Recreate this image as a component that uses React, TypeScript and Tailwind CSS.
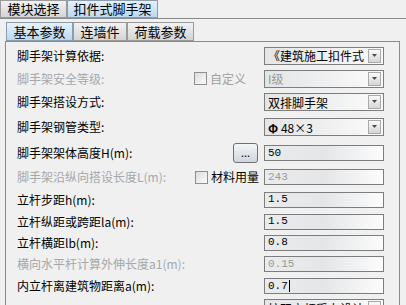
import React from 'react';

const font = "font-['SimSun','Noto_Sans_CJK_SC',sans-serif]";

function Arrow() {
  return (
    <div className="shrink-0 w-[13px] h-[14px] border border-[#a9a9a9] bg-gradient-to-b from-[#fafafa] to-[#d6d6d6] flex items-center justify-center">
      <svg width="7" height="6" viewBox="0 0 7 6">
        <path d="M1 1h5L3.5 4z" fill="#4a4a4a" />
      </svg>
    </div>
  );
}

function Combo({ text, disabled }: { text: React.ReactNode; disabled?: boolean }) {
  return (
    <div className="w-[120px] h-[18px] border border-[#7d7d7d] bg-gradient-to-r from-[#e4e5e6] via-[#eeeff0] to-[#fbfbfb] flex items-center pl-[3px] pr-[2px]">
      <span className={`flex-1 min-w-0 whitespace-nowrap overflow-hidden leading-[15px] ${disabled ? 'text-[#9a9a9a]' : 'text-black'}`}>{text}</span>
      <Arrow />
    </div>
  );
}

function Field({ value, disabled, cursor }: { value: string; disabled?: boolean; cursor?: boolean }) {
  return (
    <div className="w-[120px] h-[16px] border border-[#7d7d7d] bg-gradient-to-r from-[#eaebec] via-[#e4e6e8] to-[#fcfcfc] flex items-center pl-[3px]">
      <span className={`leading-[13px] font-['Liberation_Mono',monospace] text-[11px] ${disabled ? 'text-[#9a9a9a]' : 'text-black'}`}>{value}</span>
      {cursor && <span className="w-px h-[12px] bg-black ml-px" />}
    </div>
  );
}

function Check({ label, disabled }: { label: string; disabled?: boolean }) {
  return (
    <div className="flex items-center gap-[3px]">
      <div className="w-[13px] h-[13px] border border-[#8f8f8f] bg-gradient-to-br from-[#dcdcdc] to-[#fbfbfb]" />
      <span className={disabled ? 'text-[#a0a0a0]' : 'text-black'}>{label}</span>
    </div>
  );
}

function Row({ h, label, disabled, mid, control }: { h: string; label: string; disabled?: boolean; mid?: React.ReactNode; control: React.ReactNode }) {
  return (
    <div className={`flex items-center ${h} pl-[11px] pr-[15px]`}>
      <span className={`flex-1 whitespace-nowrap ${disabled ? 'text-[#a4a8ac]' : 'text-black'}`}>{label}</span>
      {mid}
      {control}
    </div>
  );
}

export default function App() {
  return (
    <div className={`w-[406px] h-[305px] overflow-hidden bg-[#f0f0f0] text-[12px] ${font}`}>
      <div className="flex h-[19px] border-b border-[#8a8a8a]">
        <div className="w-[67px] h-[18px] border border-[#9a9a9a] bg-gradient-to-b from-[#f2f2f2] to-[#d4d4d4] flex items-center justify-center text-[13px]">模块选择</div>
        <div className="w-[91px] h-[18px] border border-[#8a9cad] bg-gradient-to-b from-[#e6f2fc] to-[#b9d9f2] flex items-center justify-center text-[13px]">扣件式脚手架</div>
      </div>
      <div className="pl-[5px] pr-[6px] pt-[3px]">
        <div className="flex h-[19px] pl-px">
          <div className="w-[67px] border border-[#8a9cad] bg-gradient-to-b from-[#e6f2fc] to-[#b9d9f2] flex items-center justify-center text-[13px]">基本参数</div>
          <div className="w-[54px] border border-[#9a9a9a] bg-gradient-to-b from-[#f2f2f2] to-[#d4d4d4] flex items-center justify-center text-[13px]">连墙件</div>
          <div className="w-[67px] border border-[#9a9a9a] bg-gradient-to-b from-[#f2f2f2] to-[#d4d4d4] flex items-center justify-center text-[13px]">荷载参数</div>
        </div>
        <div className="border-l border-r border-t border-[#8a8a8a] h-[300px] pt-[2px]">
          <Row h="h-[23px]" label="脚手架计算依据:" control={<Combo text="《建筑施工扣件式" />} />
          <Row h="h-[23px]" label="脚手架安全等级:" disabled mid={<div className="mr-[18px]"><Check label="自定义" disabled /></div>} control={<Combo text="I级" disabled />} />
          <Row h="h-[24px]" label="脚手架搭设方式:" control={<Combo text="双排脚手架" />} />
          <Row h="h-[26px]" label="脚手架钢管类型:" control={<Combo text={<span><b>Φ</b> 48×3</span>} />} />
          <Row h="h-[26px]" label="脚手架架体高度H(m):" mid={
            <div className="mr-[6px] w-[25px] h-[20px] rounded-[3px] border border-[#707070] bg-gradient-to-b from-[#f4f6f8] to-[#cfd6dd] flex items-center justify-center text-[11px] leading-none pb-[2px]">...</div>
          } control={<Field value="50" />} />
          <Row h="h-[22px]" label="脚手架沿纵向搭设长度L(m):" disabled mid={<div className="mr-[5px]"><Check label="材料用量" /></div>} control={<Field value="243" disabled />} />
          <Row h="h-[23px]" label="立杆步距h(m):" control={<Field value="1.5" />} />
          <Row h="h-[21px]" label="立杆纵距或跨距la(m):" control={<Field value="1.5" />} />
          <Row h="h-[21px]" label="立杆横距lb(m):" control={<Field value="0.8" />} />
          <Row h="h-[22px]" label="横向水平杆计算外伸长度a1(m):" disabled control={<Field value="0.15" disabled />} />
          <Row h="h-[22px]" label="内立杆离建筑物距离a(m):" control={<Field value="0.7" cursor />} />
          <Row h="h-[22px]" label="" control={<Combo text="按双立杆受力设计" />} />
        </div>
      </div>
    </div>
  );
}
